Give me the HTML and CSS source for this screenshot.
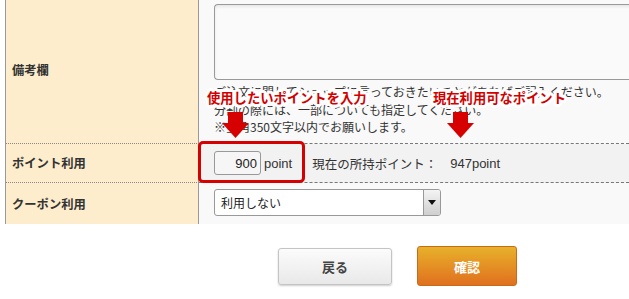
FILE: index.html
```html
<!DOCTYPE html>
<html lang="ja">
<head>
<meta charset="utf-8">
<title>注文確認</title>
<link rel="stylesheet" href="styles.css">
</head>
<body>
<div class="page">
  <div class="form">
    <div class="row row-note">
      <div class="label">備考欄</div>
      <div class="value value-note">
        <div class="memo"></div>
        <p class="note">ご注文に関してショップに言っておきたいことがあればご記入ください。<br>分割の際には、一部についても指定してください。<br>※全角350文字以内でお願いします。</p>
      </div>
    </div>
    <div class="row row-point">
      <div class="label">ポイント利用</div>
      <div class="value value-point">
        <input class="point-input" type="text" value="900"><span class="unit">point</span>
        <span class="have">現在の所持ポイント：</span><span class="have-num">947point</span>
      </div>
    </div>
    <div class="row row-coupon">
      <div class="label">クーポン利用</div>
      <div class="value value-coupon">
        <div class="select"><span class="select-text">利用しない</span><span class="select-btn"><svg width="8" height="5" viewBox="0 0 8 5"><path d="M0 0H8L4 5Z" fill="#111"/></svg></span></div>
      </div>
    </div>
  </div>
  <div class="actions">
    <button class="btn btn-back">戻る</button>
    <button class="btn btn-confirm">確認</button>
  </div>

  <div class="ann ann-input">使用したいポイントを入力</div>
  <div class="ann ann-avail">現在利用可なポイント</div>
  <svg class="arrow arrow-1" width="28" height="26" viewBox="0 0 28 26"><rect x="6" y="0" width="15" height="11" fill="#d70000"/><path d="M0 11H27L13.5 26Z" fill="#d70000"/></svg>
  <svg class="arrow arrow-2" width="28" height="26" viewBox="0 0 28 26"><rect x="6" y="0" width="15" height="11" fill="#d70000"/><path d="M0 11H27L13.5 26Z" fill="#d70000"/></svg>
  <div class="hl-box"></div>
</div>
</body>
</html>
```
FILE: styles.css
```css
html, body {
  margin: 0;
  padding: 0;
  overflow: hidden;
  background: #fff;
}
body {
  font-family: "Liberation Sans", "Noto Sans CJK JP", sans-serif;
  color: #333;
}
.page {
  position: relative;
  width: 629px;
  height: 299px;
}
.form {
  margin-left: 5px;
  border-left: 1px solid #999;
  width: 623px;
  overflow: hidden;
}
.row {
  display: grid;
  grid-template-columns: 193px 1fr;
}
.label {
  background: #fdedcc;
  border-right: 1px solid #999;
  display: flex;
  align-items: center;
  padding-left: 6px;
  font-family: "Noto Sans CJK JP", sans-serif;
  font-weight: bold;
  font-size: 12.3px;
  color: #333;
}
.value {
  background: #f9f9f9;
  padding-left: 15px;
  overflow: hidden;
}
.row-note { height: 144px; }
.row-note .label { border-bottom: 1px dotted #888; padding-bottom: 3px; }
.row-note .value { border-bottom: 1px dashed #777; }
.row-point { height: 39px; }
.row-point .label { border-bottom: 1px dotted #888; }
.row-point .value { border-bottom: 1px dashed #777; background: #f2f2f2; }
.row-coupon { height: 41px; }

.memo {
  margin-top: 4px;
  width: 440px;
  height: 74px;
  border: 1px solid #999;
  border-right: none;
  border-radius: 4px 0 0 4px;
  background: #fafafa;
  box-shadow: inset 0 2px 3px rgba(0,0,0,0.08);
}
.note {
  margin: 3px 0 0;
  font-family: "Noto Sans CJK JP", sans-serif;
  font-size: 12px;
  line-height: 17.5px;
  color: #333;
  white-space: nowrap;
}

.value-point {
  display: flex;
  align-items: center;
  font-size: 13px;
}
.point-input {
  box-sizing: border-box;
  width: 47px;
  height: 24px;
  margin: 0;
  border: 1px solid #999;
  border-radius: 3px;
  background: #f6f6f6;
  text-align: right;
  padding: 0 3px 0 0;
  font-family: "Liberation Sans", sans-serif;
  font-size: 13px;
  color: #222;
}
.unit {
  margin-left: 3px;
  color: #333;
}
.have {
  margin-left: 20px;
  font-family: "Noto Sans CJK JP", sans-serif;
  font-size: 12.5px;
}
.have-num {
  margin-left: 13px;
  font-size: 13px;
}

.value-coupon {
  display: flex;
  align-items: center;
}
.select {
  box-sizing: border-box;
  width: 227px;
  height: 27px;
  margin-top: -2px;
  display: flex;
  border: 1px solid #999;
  border-radius: 3px;
  background: #fff;
  overflow: hidden;
}
.select-text {
  flex: 1;
  display: flex;
  align-items: center;
  padding-left: 6px;
  font-family: "Noto Sans CJK JP", sans-serif;
  font-size: 12px;
  color: #222;
}
.select-btn {
  width: 16px;
  border-left: 1px solid #999;
  background: linear-gradient(#f4f4f4, #cfcfcf);
  display: flex;
  align-items: center;
  justify-content: center;
}

.actions {
  display: flex;
  align-items: center;
  gap: 25px;
  padding-left: 278px;
  margin-top: 22px;
}
.btn {
  font-family: "Noto Sans CJK JP", sans-serif;
  font-size: 13px;
  font-weight: bold;
  border-radius: 3px;
  padding: 0;
  cursor: pointer;
}
.btn-back {
  width: 114px;
  height: 37px;
  border: 1px solid #c4c4c4;
  background: linear-gradient(#fbfbfb, #e9e9e9);
  color: #444;
  box-shadow: 0 1px 2px rgba(0,0,0,0.2);
}
.btn-confirm {
  width: 100px;
  height: 40px;
  border: 1px solid #c96a1a;
  background: linear-gradient(#e8b12a, #e0701f);
  color: #fff;
}

.ann {
  position: absolute;
  font-family: "Noto Sans CJK JP", sans-serif;
  font-weight: bold;
  font-size: 13.3px;
  line-height: 16px;
  color: #d20000;
  white-space: nowrap;
  text-shadow:
    3px 0 0 #fff, -3px 0 0 #fff, 0 3px 0 #fff, 0 -3px 0 #fff,
    2px 2px 0 #fff, -2px -2px 0 #fff, 2px -2px 0 #fff, -2px 2px 0 #fff,
    3px 1px 0 #fff, 3px -1px 0 #fff, -3px 1px 0 #fff, -3px -1px 0 #fff,
    1px 3px 0 #fff, -1px 3px 0 #fff, 1px -3px 0 #fff, -1px -3px 0 #fff,
    1px 0 0 #fff, -1px 0 0 #fff, 0 1px 0 #fff, 0 -1px 0 #fff,
    2px 0 0 #fff, -2px 0 0 #fff, 0 2px 0 #fff, 0 -2px 0 #fff,
    1px 1px 0 #fff, -1px -1px 0 #fff, 1px -1px 0 #fff, -1px 1px 0 #fff,
    0 0 4px #fff;
}
.ann-input { left: 207px; top: 90px; }
.ann-avail { left: 433px; top: 90px; }
.arrow { position: absolute; }
.arrow-1 { left: 222px; top: 112px; }
.arrow-2 { left: 447px; top: 112px; }
.hl-box {
  position: absolute;
  left: 198px;
  top: 141px;
  width: 101px;
  height: 36px;
  border: 3px solid #d60000;
  border-radius: 5px;
}
```
